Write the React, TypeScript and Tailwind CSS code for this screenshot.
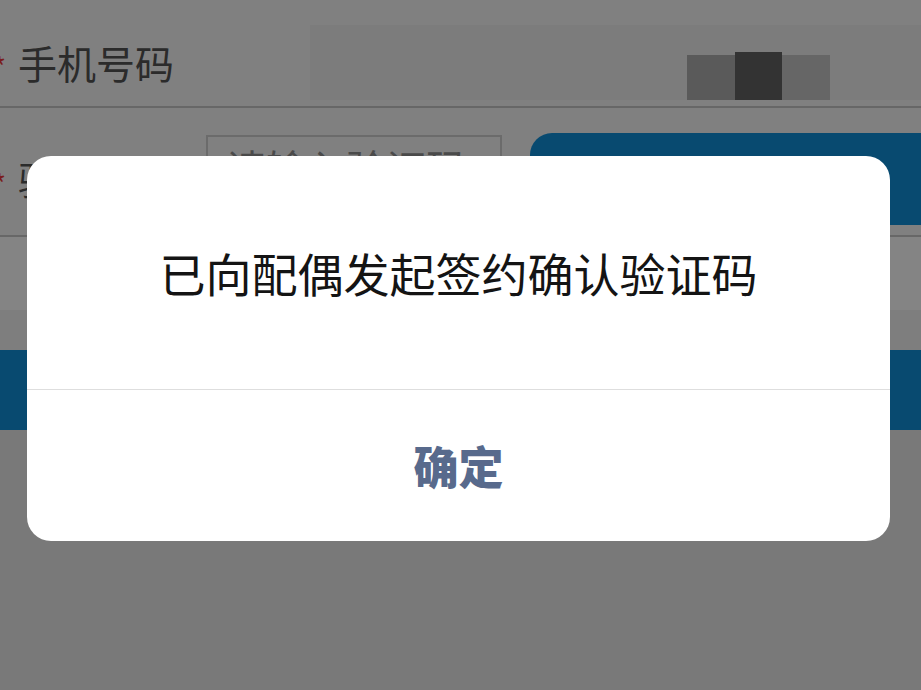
import type { ReactNode } from 'react';

const cjk = "font-['Noto_Sans_CJK_SC','Noto_Sans',sans-serif]";

function Star({ className = '' }: { className?: string }) {
  return <span className={`text-[28px] leading-none text-[#7a1c1c] ${className}`}>*</span>;
}

function FormRow({ children, className = '' }: { children: ReactNode; className?: string }) {
  return <div className={`flex border-b-2 border-[#676767] ${className}`}>{children}</div>;
}

export default function App() {
  return (
    <div className={`relative h-[690px] w-[921px] overflow-hidden bg-[#797979] ${cjk}`}>
      {/* page behind the dim overlay */}
      <div className="flex flex-col">
        <FormRow className="h-[108px] bg-[#808080]">
          <div className="flex w-[310px] items-center pt-[18px]">
            <Star className="-ml-[7px] mr-[12px] mt-[8px]" />
            <span className="text-[39px] leading-none text-[#2b2b2b]">手机号码</span>
          </div>
          <div className="mt-[25px] flex h-[75px] flex-1 items-end bg-[#7c7c7c] pl-[377px]">
            <div className="h-[45px] w-[48px] bg-[#5a5a5a]" />
            <div className="h-[48px] w-[47px] bg-[#333333]" />
            <div className="h-[45px] w-[48px] bg-[#666666]" />
          </div>
        </FormRow>

        <FormRow className="h-[129px] bg-[#808080]">
          <div className="flex w-[206px] items-center pt-[14px]">
            <Star className="-ml-[7px] mr-[12px] mt-[8px]" />
            <span className="text-[39px] leading-none text-[#2b2b2b]">验证码</span>
          </div>
          <div className="mt-[27px] h-[80px] w-[296px] overflow-hidden border-2 border-[#6b6b6b] pl-[18px] pt-[10px] text-[40px] leading-none text-[#4a4a4a]">
            请输入验证码
          </div>
          <div className="ml-[28px] mt-[25px] flex h-[92px] flex-1 items-center justify-center rounded-l-[22px] bg-[#084a70] text-[36px] text-white">
            获取验证码
          </div>
        </FormRow>

        <div className="h-[73px] bg-[#848484]" />
        <div className="h-[40px] bg-[#7e7e7e]" />
        <div className="h-[80px] bg-[#084a70]" />
      </div>

      {/* dialog */}
      <div className="absolute left-[27px] top-[156px] flex h-[385px] w-[863px] flex-col overflow-hidden rounded-[24px] bg-white">
        <div className="flex h-[234px] items-center justify-center border-b border-[#dedede] pb-[2px] text-[46px] leading-none text-[#141414]">
          已向配偶发起签约确认验证码
        </div>
        <div className="flex flex-1 items-center justify-center text-[45px] font-black leading-none text-[#586a8c]">
          确定
        </div>
      </div>
    </div>
  );
}
